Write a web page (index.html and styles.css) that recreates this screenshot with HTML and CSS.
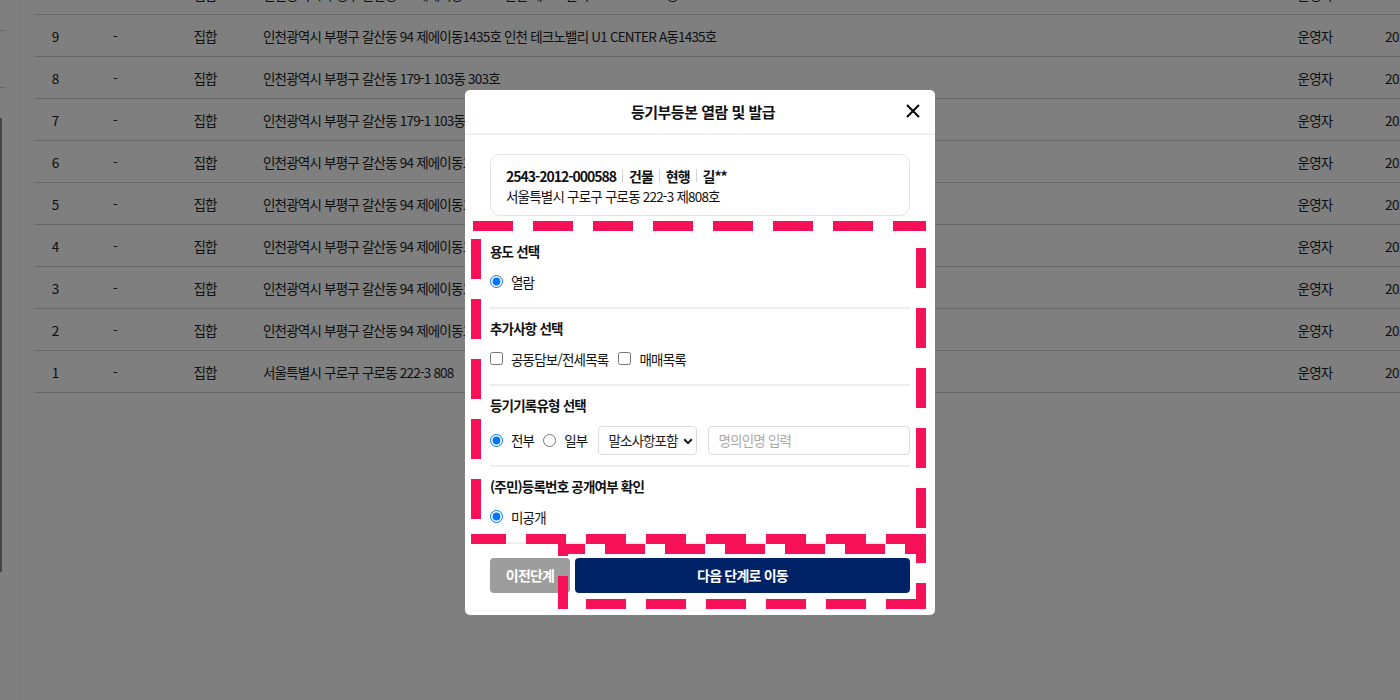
FILE: index.html
```html
<!DOCTYPE html>
<html lang="ko">
<head>
<meta charset="utf-8">
<title>등기부등본 열람 및 발급</title>
<link rel="stylesheet" href="styles.css">
</head>
<body>
<div class="page">
  <aside class="sidebar">
    <span class="side-tick side-tick--a"></span>
    <span class="side-tick side-tick--b"></span>
    <span class="side-bar"></span>
  </aside>
  <main class="main">
    <div class="table">
      <div class="row"><span class="c-no">10</span><span class="c-dash">-</span><span class="c-type">집합</span><span class="c-addr">인천광역시 부평구 갈산동 94 제에이동1436호 인천 테크노밸리 U1 CENTER A동1436호</span><span class="c-user">운영자</span><span class="c-date">2024.05.21</span></div>
      <div class="row"><span class="c-no">9</span><span class="c-dash">-</span><span class="c-type">집합</span><span class="c-addr">인천광역시 부평구 갈산동 94 제에이동1435호 인천 테크노밸리 U1 CENTER A동1435호</span><span class="c-user">운영자</span><span class="c-date">2024.05.21</span></div>
      <div class="row"><span class="c-no">8</span><span class="c-dash">-</span><span class="c-type">집합</span><span class="c-addr">인천광역시 부평구 갈산동 179-1 103동 303호</span><span class="c-user">운영자</span><span class="c-date">2024.05.21</span></div>
      <div class="row"><span class="c-no">7</span><span class="c-dash">-</span><span class="c-type">집합</span><span class="c-addr">인천광역시 부평구 갈산동 179-1 103동 303호</span><span class="c-user">운영자</span><span class="c-date">2024.05.21</span></div>
      <div class="row"><span class="c-no">6</span><span class="c-dash">-</span><span class="c-type">집합</span><span class="c-addr">인천광역시 부평구 갈산동 94 제에이동1435호 인천 테크노밸리 U1 CENTER A동1435호</span><span class="c-user">운영자</span><span class="c-date">2024.05.21</span></div>
      <div class="row"><span class="c-no">5</span><span class="c-dash">-</span><span class="c-type">집합</span><span class="c-addr">인천광역시 부평구 갈산동 94 제에이동1435호 인천 테크노밸리 U1 CENTER A동1435호</span><span class="c-user">운영자</span><span class="c-date">2024.05.21</span></div>
      <div class="row"><span class="c-no">4</span><span class="c-dash">-</span><span class="c-type">집합</span><span class="c-addr">인천광역시 부평구 갈산동 94 제에이동1435호 인천 테크노밸리 U1 CENTER A동1435호</span><span class="c-user">운영자</span><span class="c-date">2024.05.21</span></div>
      <div class="row"><span class="c-no">3</span><span class="c-dash">-</span><span class="c-type">집합</span><span class="c-addr">인천광역시 부평구 갈산동 94 제에이동1435호 인천 테크노밸리 U1 CENTER A동1435호</span><span class="c-user">운영자</span><span class="c-date">2024.05.21</span></div>
      <div class="row"><span class="c-no">2</span><span class="c-dash">-</span><span class="c-type">집합</span><span class="c-addr">인천광역시 부평구 갈산동 94 제에이동1435호 인천 테크노밸리 U1 CENTER A동1435호</span><span class="c-user">운영자</span><span class="c-date">2024.05.21</span></div>
      <div class="row"><span class="c-no">1</span><span class="c-dash">-</span><span class="c-type">집합</span><span class="c-addr">서울특별시 구로구 구로동 222-3 808</span><span class="c-user">운영자</span><span class="c-date">2024.05.21</span></div>
    </div>
  </main>
</div>

<div class="dim">
  <div class="modal">
    <div class="modal-head">
      <span></span>
      <h2 class="modal-title">등기부등본 열람 및 발급</h2>
      <button class="close" type="button" aria-label="닫기">
        <svg width="16" height="16" viewBox="0 0 16 16"><path d="M2 2L14 14M14 2L2 14" stroke="#111" stroke-width="2.2" fill="none"/></svg>
      </button>
    </div>
    <div class="modal-body">
      <div class="card">
        <div class="card-line1"><span class="num">2543-2012-000588</span><span class="sep"></span>건물<span class="sep"></span>현행<span class="sep"></span>길**</div>
        <div class="card-line2">서울특별시 구로구 구로동 222-3 제808호</div>
      </div>

      <div class="section">
        <div class="section-title">용도 선택</div>
        <div class="options">
          <label class="opt"><input type="radio" name="use" checked>열람</label>
        </div>
      </div>

      <div class="section">
        <div class="section-title">추가사항 선택</div>
        <div class="options options--wide">
          <label class="opt"><input type="checkbox">공동담보/전세목록</label>
          <label class="opt"><input type="checkbox">매매목록</label>
        </div>
      </div>

      <div class="section section--select">
        <div class="section-title">등기기록유형 선택</div>
        <div class="options options--select">
          <label class="opt"><input type="radio" name="type" checked>전부</label>
          <label class="opt"><input type="radio" name="type">일부</label>
          <span class="select-wrap">
            <select class="select"><option>말소사항포함</option></select>
            <svg class="chev" width="10" height="7" viewBox="0 0 10 7"><path d="M1.2 1.3L5 5.1L8.8 1.3" stroke="#111" stroke-width="2" fill="none"/></svg>
          </span>
          <input class="text-input" type="text" placeholder="명의인명 입력">
        </div>
      </div>

      <div class="section">
        <div class="section-title">(주민)등록번호 공개여부 확인</div>
        <div class="options">
          <label class="opt"><input type="radio" name="open" checked>미공개</label>
        </div>
      </div>
    </div>
    <div class="modal-foot">
      <button class="btn btn-prev" type="button">이전단계</button>
      <button class="btn btn-next" type="button">다음 단계로 이동</button>
    </div>
  </div>
</div>

<svg class="marks" width="1400" height="700" viewBox="0 0 1400 700">
  <g stroke="#f61159" stroke-width="10" fill="none" stroke-dasharray="40 20">
    <line x1="473" y1="226" x2="926" y2="226"/>
    <line x1="476" y1="239" x2="476" y2="519"/>
    <line x1="921" y1="248" x2="921" y2="528"/>
    <line x1="926" y1="539" x2="471" y2="539"/>
    <line x1="558" y1="549" x2="926" y2="549" stroke-dashoffset="13"/>
    <line x1="563" y1="544" x2="563" y2="609" stroke-dashoffset="28"/>
    <line x1="921" y1="544" x2="921" y2="609" stroke-dashoffset="21"/>
    <line x1="926" y1="604" x2="558" y2="604"/>
  </g>
</svg>
</body>
</html>
```

FILE: styles.css
```css
* { box-sizing: border-box; }

html, body {
  margin: 0;
  height: 100%;
  overflow: hidden;
}

body {
  font-family: "Noto Sans CJK KR", "Noto Sans", sans-serif;
  font-size: 13.5px;
  color: #222;
  background: #fff;
}

.page {
  display: flex;
  height: 100%;
}

.sidebar {
  width: 21px;
  flex: none;
  border-right: 1px solid #eee;
  display: flex;
  flex-direction: column;
}

.side-tick {
  display: block;
  width: 5px;
  height: 1px;
  background: #ccc;
}

.side-tick--a { margin-top: 30px; }
.side-tick--b { margin-top: 56px; }

.side-bar {
  display: block;
  width: 2px;
  height: 454px;
  margin-top: 30px;
  background: #888;
}

.main {
  flex: 1;
  padding-left: 14px;
  overflow: hidden;
}

.table {
  width: 1450px;
  margin-top: -27px;
}

.row {
  display: grid;
  grid-template-columns: 40px 80px 100px 1010px 100px 120px;
  height: 42px;
  align-items: center;
  border-bottom: 1px solid #ccc;
  letter-spacing: -0.8px;
  white-space: nowrap;
}

.c-no, .c-dash, .c-type, .c-user { text-align: center; }
.c-addr { padding-left: 8px; }
.c-date { padding-left: 20px; letter-spacing: -0.5px; }

/* modal */
.dim {
  position: fixed;
  inset: 0;
  padding-top: 4px;
  background: rgba(0, 0, 0, 0.5);
  display: flex;
  align-items: center;
  justify-content: center;
}

.modal {
  width: 470px;
  background: #fff;
  border-radius: 5px;
  color: #111;
}

.modal-head {
  height: 45px;
  border-bottom: 2px solid #f0f0f0;
  display: grid;
  grid-template-columns: 1fr auto 1fr;
  align-items: center;
  padding: 0 12px 0 18px;
}

.modal-title {
  margin: 0;
  font-size: 15px;
  font-weight: 700;
  letter-spacing: -0.5px;
  line-height: 20px;
  padding-top: 1px;
}

.close {
  justify-self: end;
  width: 20px;
  height: 20px;
  padding: 0;
  border: 0;
  background: none;
  display: flex;
  align-items: center;
  justify-content: center;
}

.modal-body {
  padding: 19px 25px 0;
}

.card {
  border: 1px solid #e2e2e2;
  border-radius: 10px;
  padding: 11px 15px 9px;
  margin-bottom: 16px;
  line-height: 20px;
}

.card-line1 {
  font-size: 14px;
  font-weight: 700;
  letter-spacing: -1px;
  display: flex;
  align-items: center;
}

.sep {
  display: inline-block;
  width: 1px;
  height: 13px;
  background: #d4d4d4;
  margin: 0 6px;
}

.card-line2 {
  font-size: 13.5px;
  letter-spacing: -0.8px;
}

.section {
  padding: 10px 0 15px;
  border-bottom: 2px solid #eee;
}

.section--select { padding-bottom: 10px; }

.section-title {
  font-weight: 700;
  line-height: 20px;
  margin-top: -1px;
  margin-bottom: 11px;
  letter-spacing: -0.8px;
}

.options {
  display: flex;
  align-items: center;
  height: 20px;
  gap: 8px;
  letter-spacing: -0.8px;
}

.options--wide { gap: 10px; }

.options--select {
  height: 29px;
  gap: 9px;
}

.opt {
  display: inline-flex;
  align-items: center;
  gap: 8px;
  line-height: 20px;
}

.opt input {
  margin: 0;
  width: 13px;
  height: 13px;
}

.select-wrap {
  position: relative;
  display: inline-block;
  width: 99px;
  height: 29px;
  margin-left: 1px;
}

.select {
  appearance: none;
  -webkit-appearance: none;
  width: 100%;
  height: 100%;
  border: 1px solid #ddd;
  border-radius: 4px;
  background: #fff;
  padding: 0 0 0 10px;
  font-family: inherit;
  font-size: 13.5px;
  letter-spacing: -0.9px;
  color: #222;
}

.chev {
  position: absolute;
  right: 4px;
  top: 12px;
  pointer-events: none;
}

.text-input {
  flex: 1;
  min-width: 0;
  height: 29px;
  margin-left: 2px;
  border: 1px solid #ddd;
  border-radius: 4px;
  padding: 0 10px;
  font-family: inherit;
  font-size: 13.5px;
  letter-spacing: -0.8px;
  color: #222;
}

.text-input::placeholder { color: #aaa; }

.modal-foot {
  display: flex;
  gap: 5px;
  padding: 14px 25px 22px;
}

.btn {
  height: 35px;
  border: 0;
  border-radius: 4px;
  color: #fff;
  font-family: inherit;
  font-size: 14px;
  font-weight: 700;
  letter-spacing: -0.8px;
}

.btn-prev {
  width: 80px;
  background: #9d9d9d;
}

.btn-next {
  flex: 1;
  background: #002266;
}

.marks {
  position: fixed;
  left: 0;
  top: 0;
  pointer-events: none;
}
```
